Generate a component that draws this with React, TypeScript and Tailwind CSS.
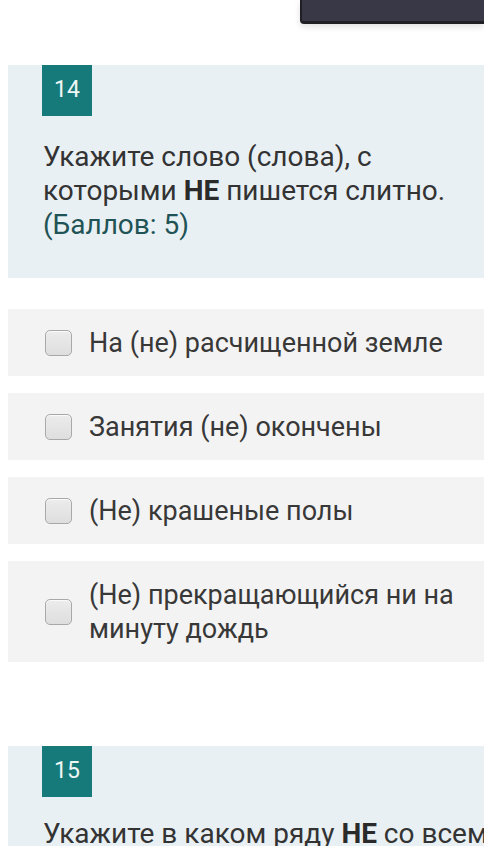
import React from "react";

function Checkbox() {
  return (
    <div className="w-[27px] h-[26px] shrink-0 rounded-[5px] border-[1.5px] border-[#a8a8a8] bg-gradient-to-b from-[#ececec] to-[#dedede] shadow-[inset_0_1px_1px_rgba(255,255,255,0.8)]" />
  );
}

function Option({ children }: { children: React.ReactNode }) {
  return (
    <div className="ml-[8px] flex items-center bg-[#f3f3f3] pl-[37px] pr-4 py-[16.5px]">
      <Checkbox />
      <div className="ml-[17px] text-[27px] leading-[34px] text-[#383838]">{children}</div>
    </div>
  );
}

function Badge({ n }: { n: number }) {
  return (
    <div className="ml-[34px] w-[50px] h-[51px] bg-[#177a7a] flex items-center justify-center text-[23px] text-[#eef6f6]">
      {n}
    </div>
  );
}

export default function App() {
  return (
    <div className="w-[484px] h-[846px] overflow-hidden bg-white" style={{ fontFamily: "Roboto, 'Noto Sans', sans-serif" }}>
      <div className="flex justify-end">
        <div className="w-[184px] h-[24px] bg-[#393846] border-l-[2px] border-b-[3px] border-[#1f1f24] rounded-bl-[4px] shadow-[0_3px_6px_rgba(0,0,0,0.12)]" />
      </div>
      <div className="mt-[41px] ml-[8px] bg-[#e9f0f3] pb-[36px]">
        <Badge n={14} />
        <div className="pl-[35px] pr-2 pt-[24px] text-[28px] leading-[34px] text-[#333]">
          Укажите слово (слова), с которыми <b className="font-bold text-[#2a2a2a]">НЕ</b> пишется слитно.
          <span className="block text-[#1f5355]">(Баллов: 5)</span>
        </div>
      </div>
      <div className="mt-[31px] flex flex-col gap-[17px]">
        <Option>На (не) расчищенной земле</Option>
        <Option>Занятия (не) окончены</Option>
        <Option>(Не) крашеные полы</Option>
        <Option>(Не) прекращающийся ни на минуту дождь</Option>
      </div>
      <div className="mt-[84px] ml-[8px] bg-[#e9f0f3] pb-[25px] overflow-hidden">
        <Badge n={15} />
        <div className="pl-[35px] pt-[20px] text-[28px] leading-[34px] text-[#333] whitespace-nowrap">
          Укажите в каком ряду <b className="font-bold text-[#2a2a2a]">НЕ</b> со всем
        </div>
      </div>
    </div>
  );
}
